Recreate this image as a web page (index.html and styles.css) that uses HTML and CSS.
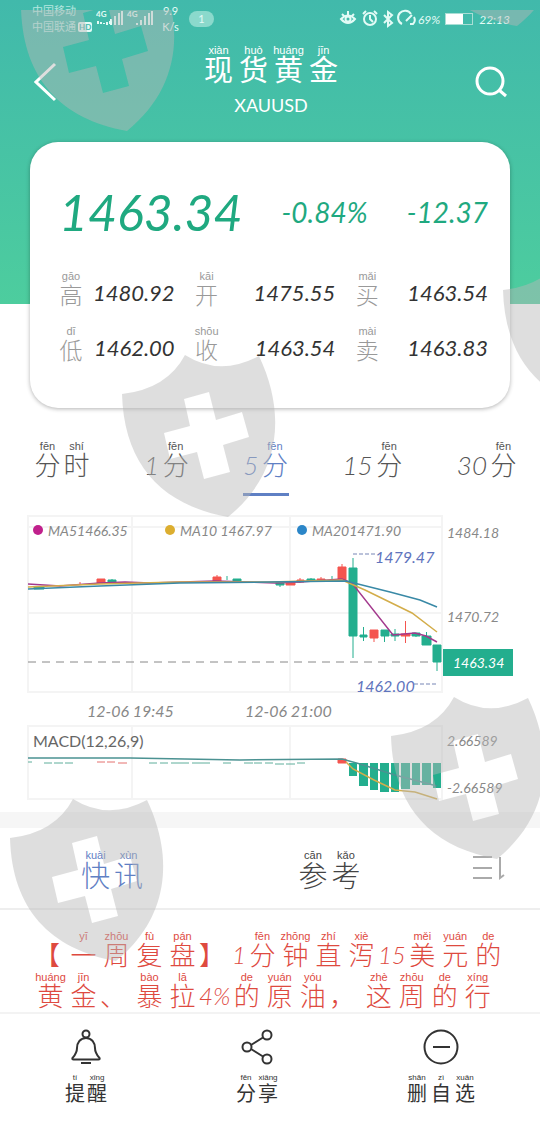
FILE: index.html
```html
<!DOCTYPE html>
<html lang="zh-CN">
<head>
    <meta charset="UTF-8">
    <meta name="viewport" content="width=device-width, initial-scale=1.0">
    <title>现货黄金 XAUUSD</title>
    <link rel="stylesheet" href="styles.css">
</head>
<body>
    <div class="top">
        <div class="status-bar">
            <div class="carriers"><span>中国移动</span><span>中国联通</span></div>
            <span class="hd">HD</span>
            <svg class="signal" width="58" height="20" viewBox="0 0 58 20">
                <text x="0" y="8">4G</text>
                <text x="31" y="8">4G</text>
                <path d="M2 12v3M5 13v2M8 14v1M11 13v2M14 12v3" />
                <path d="M11 16v-2M15 16v-6M19 16V7M23 16V4M26 16V2M41 16v-2M45 16v-5M49 16V7M53 16V4M56 16V2" />
            </svg>
            <div class="speed"><span>9.9</span><span>K/s</span></div>
            <span class="pill">1</span>
            <svg class="status-icons" width="79" height="20" viewBox="0 0 79 20">
                <path d="M2 10q7-7 14 0q-7 8-14 0zM3 5l2 2M9 2v4M15 5l-2 2" />
                <circle cx="9" cy="10" r="2.5" />
                <circle cx="31" cy="10" r="6" />
                <path d="M31 6v4l3 3M24 5l3-3M38 5l-3-3" />
                <path d="M45 6l8 8-4 3V3l4 3-8 8" />
                <path d="M63 15a7 7 0 1 1 9-10M75 8q2 4-1 7h-3M67 12l6-6" />
            </svg>
            <span class="percent">69%</span>
            <span class="battery"></span>
            <time>22:13</time>
        </div>
        <header class="header">
            <button class="icon-button" aria-label="返回">
                <svg width="24" height="40" viewBox="0 0 24 40"><path d="M21 2L2 20l19 18" /></svg>
            </button>
            <div class="title">
                <h1><ruby>现<rt>xiàn</rt></ruby><ruby>货<rt>huò</rt></ruby><ruby>黄<rt>huáng</rt></ruby><ruby>金<rt>jīn</rt></ruby></h1>
                <p>XAUUSD</p>
            </div>
            <button class="icon-button" aria-label="搜索">
                <svg width="34" height="34" viewBox="0 0 34 34"><circle cx="16" cy="16" r="13" /><path d="M25 25l7 6" /></svg>
            </button>
        </header>
        <section class="quote-card">
            <div class="price-row">
                <strong>1463.34</strong>
                <span>-0.84%</span>
                <span>-12.37</span>
            </div>
            <dl class="quotes">
                <div><dt><ruby>高<rt>gāo</rt></ruby></dt><dd>1480.92</dd></div>
                <div><dt><ruby>开<rt>kāi</rt></ruby></dt><dd>1475.55</dd></div>
                <div><dt><ruby>买<rt>mǎi</rt></ruby></dt><dd>1463.54</dd></div>
                <div><dt><ruby>低<rt>dī</rt></ruby></dt><dd>1462.00</dd></div>
                <div><dt><ruby>收<rt>shōu</rt></ruby></dt><dd>1463.54</dd></div>
                <div><dt><ruby>卖<rt>mài</rt></ruby></dt><dd>1463.83</dd></div>
            </dl>
        </section>
    </div>

    <nav class="periods">
        <button><ruby>分<rt>fēn</rt></ruby><ruby>时<rt>shí</rt></ruby></button>
        <button><i>1</i><ruby>分<rt>fēn</rt></ruby></button>
        <button class="active"><i>5</i><ruby>分<rt>fēn</rt></ruby></button>
        <button><i>15</i><ruby>分<rt>fēn</rt></ruby></button>
        <button><i>30</i><ruby>分<rt>fēn</rt></ruby></button>
    </nav>

    <svg class="chart" viewBox="0 0 540 302">
        <!-- grid -->
        <path class="grid" d="M28 6H442V182H28zM28 17H442M28 103H442M132 6V182M290 6V182M28 216H442V289H28zM132 216V289M290 216V289" />

        <!-- legend -->
        <circle cx="38" cy="20" r="5" fill="#c0208c" />
        <circle cx="170" cy="20" r="5" fill="#dcae30" />
        <circle cx="302" cy="20" r="5" fill="#2b86c8" />
        <text class="small" x="48" y="26">MA51466.35</text>
        <text class="small" x="180" y="26">MA10 1467.97</text>
        <text class="small" x="312" y="26">MA201471.90</text>

        <!-- candles -->
        <path class="dash" d="M28 152H432" />
        <g class="down">
            <path d="M353 48V148M363.500 117V131M384.500 120V132M395 119V131M416 123V127M426.500 122V135M437 135V161M112 69V73M227 66V70M280 71V77M311 68V72M332 66V71" />
            <path d="M349 58h8v68h-8zM360 125h7v2h-7zM381 120h8v6h-8zM391 124h8v2h-8zM412 123h8v3h-8zM422 126h9v9h-9zM433 135h8v17h-8zM108 70h8v2h-8zM233 69h8v2h-8zM276 72h8v3h-8zM307 69h8v2h-8zM34 77h10v2h-10z" />
        </g>
        <g class="up">
            <path d="M342 54V70M374 120V132M405.500 111V133M80 72V75M217 65V70M300 68V73M321 67V71" />
            <path d="M338 57h8v13h-8zM370 120h8v8h-8zM401 124h9v2h-9zM97 69h8v4h-8zM213 67h8v4h-8zM286 73h9v2h-9zM297 70h7v2h-7zM317 69h8v2h-8z" />
        </g>
        <path class="line ma5" d="M28 74L60 76L100 73L125 72L150 73L215 71L275 73L300 72L342 69L352 73L393 125L415 123L426 126L437 132" />
        <path class="line ma10" d="M28 77L100 74L180 72L270 72L342 70L365 80L412 103L437 122" />
        <path class="line ma20" d="M28 79L100 76L180 73L270 72L346 71L390 82L420 90L437 97" />

        <path class="blue-dash" d="M353 44H375M414 174H437" />
        <text class="mark" x="375" y="53">1479.47</text>
        <text class="mark" x="356" y="182">1462.00</text>

        <!-- price axis -->
        <text class="axis" x="447" y="28">1484.18</text>
        <text class="axis" x="447" y="112">1470.72</text>
        <rect x="443" y="139" width="70" height="27" fill="#23ae8e" />
        <text class="axis tag" x="453" y="158">1463.34</text>

        <text class="date" x="87" y="207">12-06 19:45</text>
        <text class="date" x="245" y="207">12-06 21:00</text>

        <!-- MACD -->
        <text class="macd" x="33" y="237">MACD(12,26,9)</text>
        <path class="bars" d="M349 253h8v13h-8zM359 253h9v23h-9zM370 253h8v27h-8zM380 253h9v29h-9zM391 253h8v29h-8zM401 253h9v26h-9zM412 253h8v22h-8zM422 253h9v22h-9zM433 253h8v25h-8z" />
        <path class="ticks" d="M28 252h4M44 253h8M54 253h9M65 253h8M149 253h8M160 253h8M171 253h18M192 253h18M223 253h8M244 253h9M254 253h8M265 253h8M275 254h9M286 254h9M297 253h8" />
        <path class="ticks red" d="M97 252h8M107 252h8M118 253h9" />
        <path class="up" d="M338 249h8v4h-8z" />
        <path class="line ma10" d="M346 252L353 259L374 270L395 280L415 282L437 289" />
        <path class="line macd-line" d="M28 248H130L240 250L342 249L360 254L395 265L437 276" />
        <text class="axis" x="447" y="236">2.66589</text>
        <text class="axis" x="447" y="283">-2.66589</text>
    </svg>

    <section class="news">
        <nav class="news-tabs">
            <button class="active"><ruby>快<rt>kuài</rt></ruby><ruby>讯<rt>xùn</rt></ruby></button>
            <button><ruby>参<rt>cān</rt></ruby><ruby>考<rt>kǎo</rt></ruby></button>
            <button class="sort" aria-label="排序">
                <svg width="34" height="26" viewBox="0 0 34 26"><path d="M1 2h19M1 13h19M1 23h19M28 2v21l4-3" /></svg>
            </button>
        </nav>
        <div class="headline">
            <p><span>【</span><ruby>一<rt>yī</rt></ruby><ruby>周<rt>zhōu</rt></ruby><ruby>复<rt>fù</rt></ruby><ruby>盘<rt>pán</rt></ruby><span>】</span><i>1</i><ruby>分<rt>fēn</rt></ruby><ruby>钟<rt>zhōng</rt></ruby><ruby>直<rt>zhí</rt></ruby><ruby>泻<rt>xiè</rt></ruby><i>15</i><ruby>美<rt>měi</rt></ruby><ruby>元<rt>yuán</rt></ruby><ruby>的<rt>de</rt></ruby></p>
            <p><ruby>黄<rt>huáng</rt></ruby><ruby>金<rt>jīn</rt></ruby><span>、</span><ruby>暴<rt>bào</rt></ruby><ruby>拉<rt>lā</rt></ruby><i>4%</i><ruby>的<rt>de</rt></ruby><ruby>原<rt>yuán</rt></ruby><ruby>油<rt>yóu</rt></ruby><span>，</span><ruby>这<rt>zhè</rt></ruby><ruby>周<rt>zhōu</rt></ruby><ruby>的<rt>de</rt></ruby><ruby>行<rt>xíng</rt></ruby></p>
        </div>
    </section>

    <footer class="actions">
        <button>
            <svg width="36" height="36" viewBox="0 0 36 36"><circle cx="18" cy="5" r="3.500" /><path d="M18 9c-6 0-9 5-9 10 0 5-2 7-4.500 10-.5 1 0 1.500 1 1.500h25c1 0 1.500-.5 1-1.500C29 26 27 24 27 19c0-5-3-10-9-10zM13 34h10" /></svg>
            <span><ruby>提<rt>tí</rt></ruby><ruby>醒<rt>xǐng</rt></ruby></span>
        </button>
        <button>
            <svg width="36" height="36" viewBox="0 0 36 36"><circle cx="8" cy="18" r="4.500" /><circle cx="28" cy="6" r="4.500" /><circle cx="28" cy="30" r="4.500" /><path d="M12 16l12-7.500M12 20l12 7.500" /></svg>
            <span><ruby>分<rt>fēn</rt></ruby><ruby>享<rt>xiǎng</rt></ruby></span>
        </button>
        <button>
            <svg width="36" height="36" viewBox="0 0 36 36"><circle cx="18" cy="18" r="16.500" /><path d="M10 18h17" /></svg>
            <span class="wide"><ruby>删<rt>shān</rt></ruby><ruby>自<rt>zì</rt></ruby><ruby>选<rt>xuǎn</rt></ruby></span>
        </button>
    </footer>

    <!-- shield watermarks over the page -->
    <svg class="watermarks" aria-hidden="true">
        <defs>
            <path id="shield" fill-rule="evenodd" d="M0 39Q45 34 63 0Q98 22 137 1C165 60 158 120 106 162C40 150 2 110 0 39ZM62 44L87 37L94 65L120 57L127 82L101 90L108 117L82 124L75 97L48 104L42 78L68 71Z" />
        </defs>
        <use href="#shield" x="21" y="-41" />
        <use href="#shield" x="411" y="-146" />
        <use href="#shield" x="503" y="241" />
        <use href="#shield" x="122" y="345" />
        <use href="#shield" x="391" y="687" />
        <use href="#shield" x="10" y="789" />
    </svg>
</body>
</html>
```
FILE: styles.css
```css
* {
    box-sizing: border-box;
}
body {
    margin: 0;
    position: relative;
    background: #fff;
    color: #444;
    font-family: Lato, "Noto Sans CJK SC", sans-serif;
}
h1, p, dl, dd {
    margin: 0;
    font-weight: 300;
}
button {
    padding: 0;
    border: 0;
    background: none;
    color: inherit;
    font: inherit;
}
svg {
    display: block;
    fill: none;
    stroke: currentColor;
}
svg text {
    stroke: none;
    fill: #888;
    font-style: italic;
}
/* pinyin stacked over each character */
ruby {
    display: flex;
    flex-direction: column-reverse;
    align-items: center;
    width: 33px;
    line-height: 28px;
    font-weight: 300;
    white-space: nowrap;
}
rt {
    display: block;
    font-family: "Liberation Sans", sans-serif;
    font-size: 11px;
    font-weight: 400;
    line-height: 10px;
}

.top {
    background: linear-gradient(#41b9ab, #4dcd9e) no-repeat;
    background-size: 100% 304px;
    padding-bottom: 12px;
}
.status-bar {
    display: flex;
    align-items: center;
    height: 38px;
    padding: 0 30px 0 32px;
    color: #e3fbf6;
}
.carriers, .speed {
    display: flex;
    flex-direction: column;
    font-size: 11px;
    line-height: 16px;
}
.carriers {
    opacity: 0.7;
}
.hd {
    align-self: flex-end;
    margin: 0 4px 6px 2px;
    padding: 0 1px;
    border-radius: 2px;
    background: #e3fbf6;
    color: #41b9ab;
    font-size: 8px;
    font-weight: 700;
    line-height: 10px;
}
.signal text {
    fill: currentColor;
    font-size: 8px;
    font-style: normal;
    font-weight: 700;
}
.signal path {
    stroke-width: 2;
}
.speed {
    margin-left: 8px;
    text-align: center;
}
.pill {
    width: 25px;
    margin-left: 10px;
    border-radius: 8px;
    background: #8bd9cc;
    font-size: 11px;
    line-height: 16px;
    text-align: center;
}
.status-icons {
    margin-left: auto;
    stroke-width: 2;
}
.percent, .status-bar time {
    font-size: 12px;
    font-style: italic;
}
.battery {
    width: 28px;
    height: 12px;
    margin: 0 6px 0 5px;
    border: 1px solid #a9ded5;
    background: linear-gradient(90deg, #fff 64%, transparent 64%);
}

.header {
    display: flex;
    align-items: center;
    justify-content: space-between;
    height: 104px;
    padding: 0 32px 16px 34px;
    color: #fff;
}
.icon-button {
    width: 34px;
    stroke-width: 3;
}
.title {
    text-align: center;
}
.title h1 {
    display: flex;
    font-size: 29px;
}
.title ruby {
    width: 35px;
    line-height: 30px;
    font-weight: 400;
}
.title p {
    font-size: 18px;
    font-weight: 400;
    line-height: 28px;
    margin-top: 6px;
}

.quote-card {
    margin: 0 30px;
    padding: 34px 22px 44px 29px;
    border-radius: 28px;
    background: #fff;
    box-shadow: 0 1px 4px rgba(0, 0, 0, 0.3);
}
.price-row {
    display: flex;
    align-items: center;
    justify-content: space-between;
    height: 72px;
    color: #1fa980;
    font-size: 28px;
    font-style: italic;
}
.price-row strong {
    font-size: 50px;
    font-weight: 400;
}
.quotes {
    display: grid;
    grid-template-columns: 115fr 140fr 132fr;
    gap: 17px 20px;
    margin-top: 23px;
}
.quotes div {
    display: flex;
    align-items: center;
    justify-content: space-between;
}
.quotes dt {
    color: #999;
    font-size: 23px;
}
.quotes ruby {
    width: 24px;
}
.quotes dd {
    padding-top: 6px;
    color: #333;
    font-size: 22px;
    font-style: italic;
    font-weight: 400;
    line-height: 26px;
}

.periods {
    display: flex;
    justify-content: space-between;
    padding: 21px 22px 14px 33px;
    color: #555;
    font-size: 26px;
}
.periods button {
    display: flex;
    align-items: flex-end;
    height: 55px;
    padding-bottom: 14px;
    border-bottom: 3px solid transparent;
}
.periods ruby {
    width: 29px;
}
.periods i {
    margin-right: 2px;
    font-weight: 300;
    line-height: 28px;
}
.periods .active {
    border-color: #5f80c4;
    color: #5f80c4;
}

.chart {
    width: 100%;
    stroke: none;
}
.chart .small { font-size: 14px; }
.chart .axis { font-size: 14px; }
.chart .date { font-size: 16px; }
.chart .mark { font-size: 16px; fill: #5f74bd; }
.chart .tag { fill: #fff; }
.chart .macd {
    font-size: 16px;
    font-style: normal;
    fill: #666;
}
.grid { stroke: #f4f4f4; stroke-width: 2; }
.dash { stroke: #888; stroke-dasharray: 8 6; }
.blue-dash { stroke: #7785b5; stroke-dasharray: 4 2; }
.down { fill: #23ae8e; stroke: #23ae8e; }
.up { fill: #f4544f; stroke: #f4544f; }
.line { stroke-width: 1.5; }
.ma5 { stroke: #a3398d; }
.ma10 { stroke: #d3ad4a; }
.ma20 { stroke: #3989a6; }
.macd-line { stroke: #4b9292; }
.bars { fill: #23ae8e; }
.ticks { stroke: #5fae9b; }
.red { stroke: #e4706e; }

.news {
    border-top: 16px solid #f6f6f6;
}
.news-tabs {
    display: grid;
    grid-template-columns: 218fr 176fr 34fr;
    align-items: end;
    height: 82px;
    padding: 0 34px 17px 79px;
    border-bottom: 2px solid #eee;
    font-size: 29px;
}
.news-tabs button {
    display: flex;
}
.news-tabs ruby {
    line-height: 31px;
}
.news-tabs .active {
    color: #5f80c4;
}
.news-tabs .sort {
    padding-bottom: 10px;
    color: #aaa;
    stroke-width: 2;
}
.headline {
    display: grid;
    gap: 3px;
    padding: 21px 30px 2px 34px;
    color: #de4a3f;
    font-size: 26px;
    line-height: 28px;
    white-space: nowrap;
}
.headline p {
    display: flex;
    align-items: flex-end;
}
.headline span {
    width: 33px;
}
.headline i {
    font-size: 24px;
}

.actions {
    display: grid;
    grid-template-columns: 172fr 170fr 198fr;
    height: 110px;
    border-top: 2px solid #f3f3f3;
    background: #fff;
    color: #333;
    font-size: 20px;
}
.actions button {
    display: flex;
    flex-direction: column;
    align-items: center;
    padding-top: 15px;
}
.actions svg {
    stroke-width: 2;
}
.actions span {
    display: flex;
    margin-top: 8px;
}
.actions ruby {
    width: 22px;
    line-height: 20px;
    font-weight: 400;
}
.actions .wide ruby {
    width: 24px;
}
.actions rt {
    font-size: 8px;
}

.watermarks {
    position: absolute;
    top: 10px;
    left: 0;
    width: 100%;
    height: calc(100% - 10px);
    overflow: hidden;
    pointer-events: none;
    fill: rgba(183, 183, 183, 0.46);
    stroke: none;
}
```
